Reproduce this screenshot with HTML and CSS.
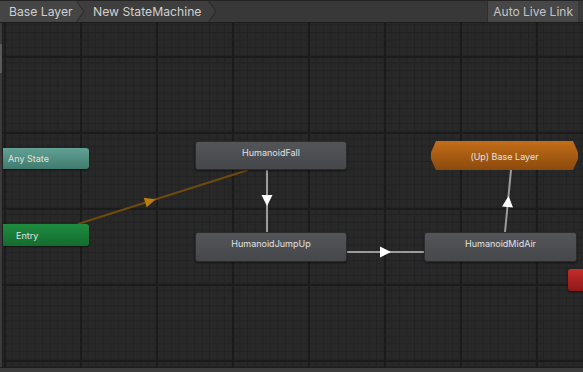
FILE: index.html
```html
<!DOCTYPE html>
<html>
<head>
<meta charset="utf-8">
<link rel="stylesheet" href="styles.css">
</head>
<body>
<div class="app">
  <div class="toolbar">
    <div class="crumbs">
      <div class="crumb crumb-first">Base Layer<svg class="chev" width="9" height="21" viewBox="0 0 9 21"><polyline points="0.5,0 8,10.5 0.5,21" fill="none" stroke="#2a2a2a" stroke-width="1.2"/></svg></div>
      <div class="crumb crumb-second">New StateMachine<svg class="chev" width="9" height="21" viewBox="0 0 9 21"><polyline points="0.5,0 8,10.5 0.5,21" fill="none" stroke="#2a2a2a" stroke-width="1.2"/></svg></div>
    </div>
    <div class="spacer"></div>
    <div class="live-btn">Auto Live Link</div>
  </div>
  <div class="body-row">
    <div class="strip"><div class="strip-thumb"></div></div>
    <div class="canvas">
      <svg class="edges" width="580" height="345" viewBox="0 0 580 345">
        <line x1="75" y1="201" x2="245" y2="147" stroke="#6e4a0c" stroke-width="2"/>
        <polygon points="-5,-5 6,0 -5,5" fill="#b97c0e" transform="translate(147 178) rotate(-17.6)"/>
        <line x1="264" y1="147" x2="264" y2="209" stroke="#9c9c9c" stroke-width="2"/>
        <polygon points="-5,-5.5 6,0 -5,5.5" fill="#ffffff" transform="translate(264 177) rotate(90)"/>
        <line x1="344" y1="229" x2="421" y2="229" stroke="#9c9c9c" stroke-width="2"/>
        <polygon points="-5,-5.5 6,0 -5,5.5" fill="#ffffff" transform="translate(382 229)"/>
        <line x1="502" y1="209" x2="508" y2="147" stroke="#9c9c9c" stroke-width="2"/>
        <polygon points="-5,-5.5 6,0 -5,5.5" fill="#ffffff" transform="translate(505 179) rotate(-84.5)"/>
      </svg>
      <div class="node node-any" style="left:0;top:125px;width:86px;height:21px">Any State</div>
      <div class="node node-entry" style="left:0;top:201px;width:86px;height:22px">Entry</div>
      <div class="node node-state" style="left:192px;top:118px;width:152px;height:29px">HumanoidFall</div>
      <div class="node node-state" style="left:192px;top:209px;width:152px;height:30px">HumanoidJumpUp</div>
      <div class="node node-state" style="left:421px;top:209px;width:153px;height:30px">HumanoidMidAir</div>
      <div class="node node-up" style="left:428px;top:118px;width:147px;height:29px">(Up) Base Layer</div>
      <div class="node node-exit" style="left:565px;top:246px;width:20px;height:22px"></div>
    </div>
  </div>
  <div class="bottom-bar"></div>
</div>
</body>
</html>
```
FILE: styles.css
```css
html, body {
  margin: 0;
  padding: 0;
  background: #282828;
  overflow: hidden;
}
.app {
  width: 583px;
  height: 372px;
  display: flex;
  flex-direction: column;
  font-family: Inter, "Noto Sans", sans-serif;
}
.toolbar {
  height: 21px;
  display: flex;
  align-items: stretch;
  background: #383838;
  border-top: 1px solid #232323;
  border-bottom: 1px solid #1c1c1c;
}
.crumbs {
  display: flex;
  align-items: stretch;
}
.crumb {
  display: flex;
  align-items: center;
  font-size: 12.2px;
  color: #d0d0d0;
  position: relative;
  box-sizing: border-box;
  clip-path: polygon(0 0, calc(100% - 8px) 0, 100% 50%, calc(100% - 8px) 100%, 0 100%);
}
.chev {
  position: absolute;
  right: 0;
  top: 0;
}
.crumb-first {
  width: 85px;
  padding-left: 9px;
  background: #454545;
  z-index: 2;
}
.crumb-second {
  width: 141px;
  padding-left: 17px;
  margin-left: -9px;
  background: #3e3e3e;
  z-index: 1;
}
.spacer {
  flex: 1;
}
.live-btn {
  display: flex;
  align-items: center;
  padding: 0 5px 0 5px;
  margin-right: 5px;
  background: #474747;
  color: #c4c4c4;
  font-size: 12px;
  border-left: 1px solid #2e2e2e;
}
.body-row {
  flex: 1;
  display: flex;
  min-height: 0;
}
.strip {
  width: 2px;
  background: #3a3a3a;
  border-right: 1px solid #1e1e1e;
  position: relative;
}
.strip-thumb {
  margin-top: 21px;
  height: 29px;
  background: #5a5a5a;
}
.canvas {
  flex: 1;
  position: relative;
  overflow: hidden;
  background-color: #282828;
  background-image:
    linear-gradient(to right, #1b1b1b 2px, transparent 2px),
    linear-gradient(to bottom, #1b1b1b 2px, transparent 2px),
    linear-gradient(to right, #222222 1px, transparent 1px),
    linear-gradient(to bottom, #222222 1px, transparent 1px);
  background-size: 76px 76px, 76px 76px, 7.6px 7.6px, 7.6px 7.6px;
  background-position: 1px 0, 0 33px, 1px 0, 0 1.4px;
}
.edges {
  position: absolute;
  left: 0;
  top: 0;
}
.node {
  position: absolute;
  box-sizing: border-box;
  border-radius: 3px;
  font-size: 9px;
  color: #e2e2e2;
  display: flex;
  align-items: flex-start;
  justify-content: center;
  padding-top: 5px;
  box-shadow: 0 1px 2px rgba(0,0,0,0.5);
}
.node-state {
  background: linear-gradient(to bottom, #535559, #45474b);
  border: 1px solid #2b2c2e;
}
.node-any {
  background: linear-gradient(to bottom, #62a294, #3f7b6e);
  justify-content: flex-start;
  align-items: center;
  padding: 0 0 0 5px;
  border-radius: 0 3px 3px 0;
}
.node-entry {
  background: linear-gradient(to bottom, #1f8c40, #146c2f);
  justify-content: flex-start;
  align-items: center;
  padding: 0 0 0 13px;
  border-radius: 0 3px 3px 0;
}
.node-up {
  background: linear-gradient(to bottom, #c46e18, #8a4a0d);
  clip-path: polygon(5px 0, calc(100% - 5px) 0, 100% 40%, 100% 62%, calc(100% - 5px) 100%, 5px 100%, 0 62%, 0 40%);
  border-radius: 0;
  box-shadow: none;
  align-items: center;
  padding-top: 1px;
}
.node-exit {
  background: linear-gradient(to bottom, #c42d2d, #8e1818);
}
.bottom-bar {
  height: 4px;
  background: #3c3c3c;
  border-top: 1px solid #1e1e1e;
}
```
